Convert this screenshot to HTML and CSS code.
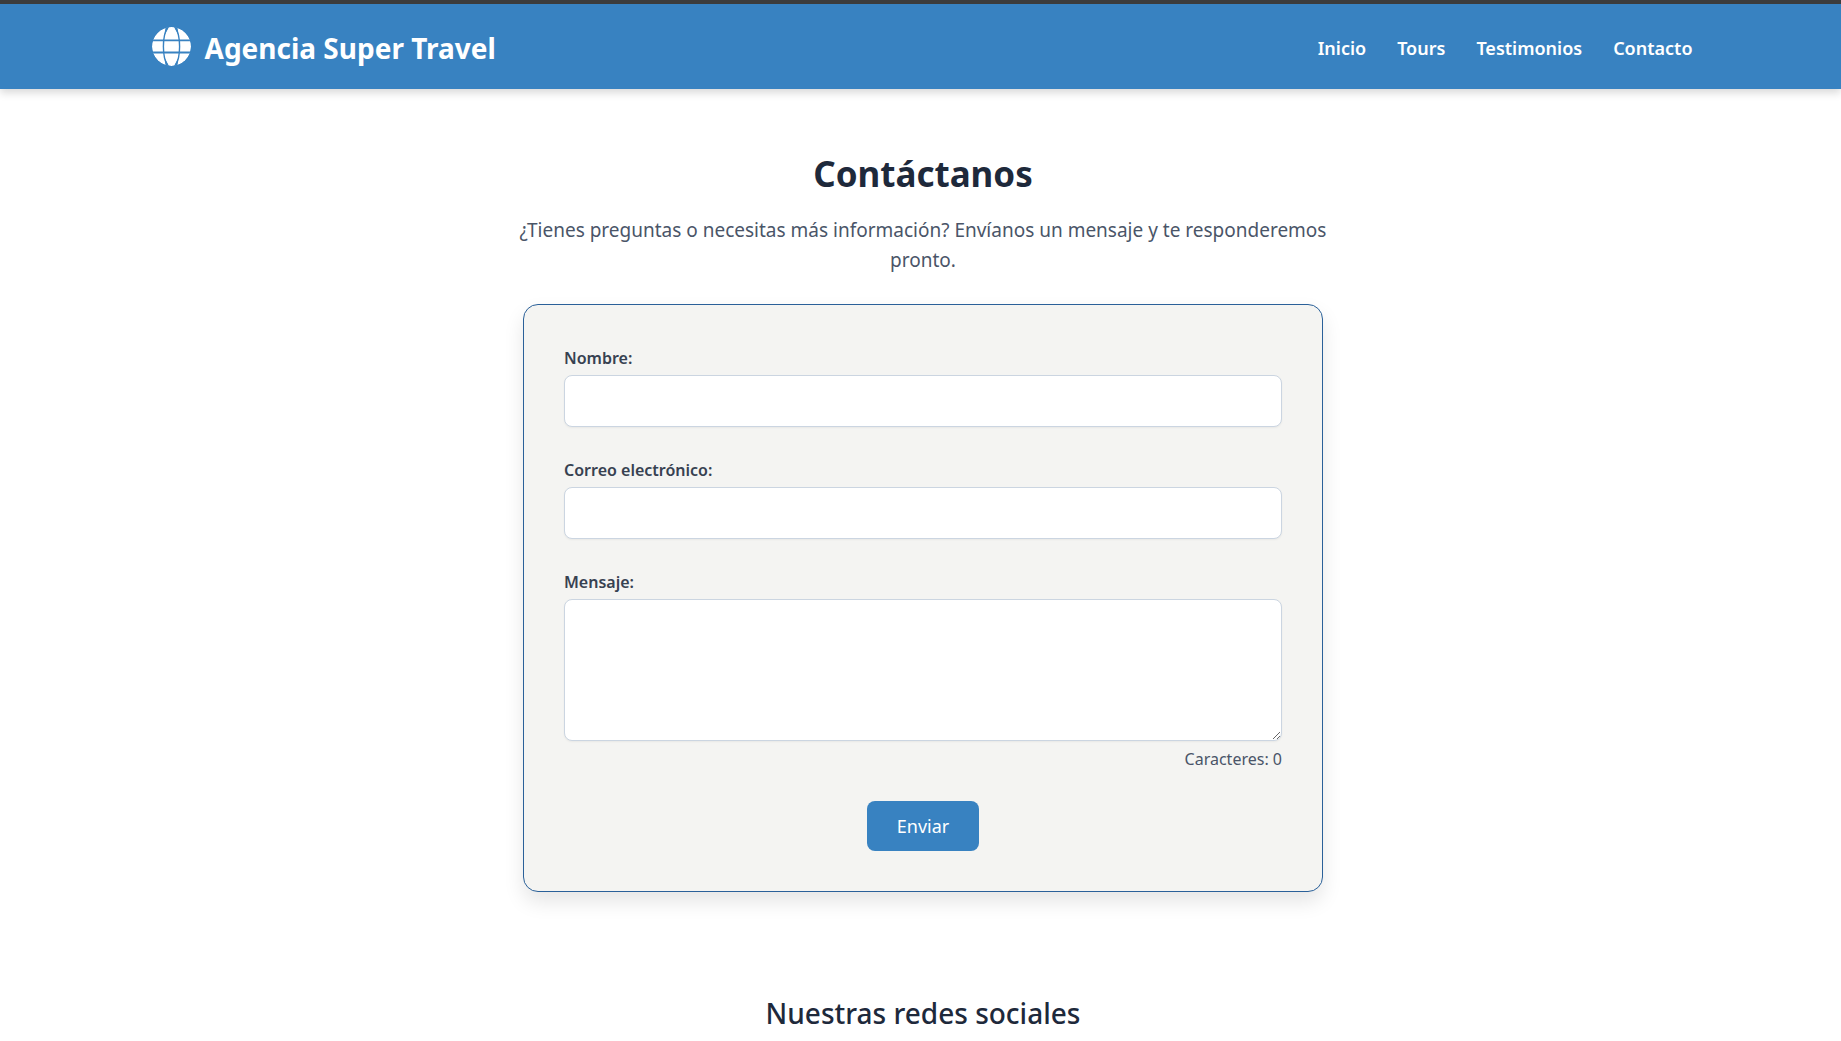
FILE: index.html
```html
<!DOCTYPE html>
<html lang="es">
<head>
<meta charset="utf-8">
<meta name="viewport" content="width=device-width, initial-scale=1">
<title>Contacto - Agencia Super Travel</title>
<link rel="stylesheet" href="styles.css">
</head>
<body>
<header class="site-header">
  <div class="header-inner">
    <a class="brand" href="#">
      <svg class="brand-icon" viewBox="0 0 39 39" aria-hidden="true">
        <circle cx="19.5" cy="19.5" r="19.5" fill="#fff"/>
        <g fill="none" stroke="#3882c1">
          <path stroke-width="1.8" d="M0 13.300H39M0 25.500H39"/>
          <path stroke-width="1.4" d="M16.500 -1C9.700 8 9.700 31 16.500 40M22.500 -1C29.300 8 29.300 31 22.500 40"/>
        </g>
        <path fill="#3882c1" d="M13.500 0H17L12.700 8ZM25.500 0H22L26.300 8ZM13.500 39H17L12.700 31ZM25.500 39H22L26.300 31Z"/>
      </svg>
      <span class="brand-name">Agencia Super Travel</span>
    </a>
    <nav class="site-nav">
      <a href="#">Inicio</a>
      <a href="#">Tours</a>
      <a href="#">Testimonios</a>
      <a href="#">Contacto</a>
    </nav>
  </div>
</header>
<main class="page">
  <section class="contact">
    <h1>Contáctanos</h1>
    <p class="intro">¿Tienes preguntas o necesitas más información? Envíanos un mensaje y te responderemos pronto.</p>
    <form class="card">
      <div class="field">
        <label for="nombre">Nombre:</label>
        <input id="nombre" type="text">
      </div>
      <div class="field">
        <label for="correo">Correo electrónico:</label>
        <input id="correo" type="email">
      </div>
      <div class="field">
        <label for="mensaje">Mensaje:</label>
        <textarea id="mensaje"></textarea>
        <p class="counter">Caracteres: 0</p>
      </div>
      <button class="submit" type="submit">Enviar</button>
    </form>
  </section>
  <section class="social">
    <h2>Nuestras redes sociales</h2>
  </section>
</main>
</body>
</html>
```
FILE: styles.css
```css
* { box-sizing: border-box; margin: 0; }

body {
  background: #fff;
  color: #1e293b;
  font-family: "Segoe UI", "Noto Sans", sans-serif;
  font-size: 16px;
  line-height: 27px;
}

.site-header {
  padding: 20px 5% 20px calc(5% + 3px);
  border-top: 4px solid #3c3c3c;
  background: #3882c1;
  box-shadow: 0 4px 8px rgba(0, 0, 0, .15);
}

.header-inner {
  display: flex;
  align-items: center;
  justify-content: space-between;
  max-width: 1541px;
  min-height: 45px;
  margin: 0 auto;
}

.brand {
  display: flex;
  align-items: center;
  gap: 14px;
  color: #fff;
  font-size: 28px;
  font-weight: 700;
  line-height: 41px;
  text-decoration: none;
}

.brand-icon {
  width: 39px;
  height: 39px;
  border-radius: 50%;
}

.brand-name { padding-top: 4px; }

.site-nav { display: flex; gap: 31px; padding-top: 3px; }

.site-nav a {
  color: #fff;
  font-size: 18px;
  font-weight: 600;
  text-decoration: none;
}

.page { padding: 60px 20px 40px 25px; }

.contact { max-width: 820px; margin: 0 auto; }

h1 {
  font-size: 35px;
  font-weight: 700;
  line-height: 50px;
  text-align: center;
}

.intro {
  margin: 16px 0 29px;
  color: #4a5568;
  font-size: 19px;
  line-height: 30px;
  text-align: center;
}

.card {
  display: flex;
  flex-direction: column;
  gap: 30px;
  max-width: 800px;
  margin: 0 auto;
  padding: 40px;
  border: 1px solid #2a6099;
  border-radius: 15px;
  background: #f4f4f2;
  box-shadow: 0 10px 20px rgba(0, 0, 0, .1);
}

.field { display: flex; flex-direction: column; gap: 3px; }

label { color: #374151; font-weight: 600; }

input,
textarea {
  width: 100%;
  padding: 12px;
  border: 1px solid #cbd5e1;
  border-radius: 8px;
  background: #fff;
  box-shadow: 0 1px 2px rgba(0, 0, 0, .05);
  color: inherit;
  font: inherit;
}

input { height: 52px; }

textarea { height: 142px; resize: vertical; }

.counter {
  padding-top: 4px;
  color: #4a5568;
  line-height: 23px;
  text-align: right;
}

.submit {
  align-self: center;
  padding: 10px 30px;
  border: 0;
  border-radius: 8px;
  background: #3882c1;
  color: #fff;
  font: inherit;
  font-size: 18px;
  line-height: 30px;
}

.social { padding-top: 99px; text-align: center; }

h2 { font-size: 28px; font-weight: 500; line-height: 44px; }
```
